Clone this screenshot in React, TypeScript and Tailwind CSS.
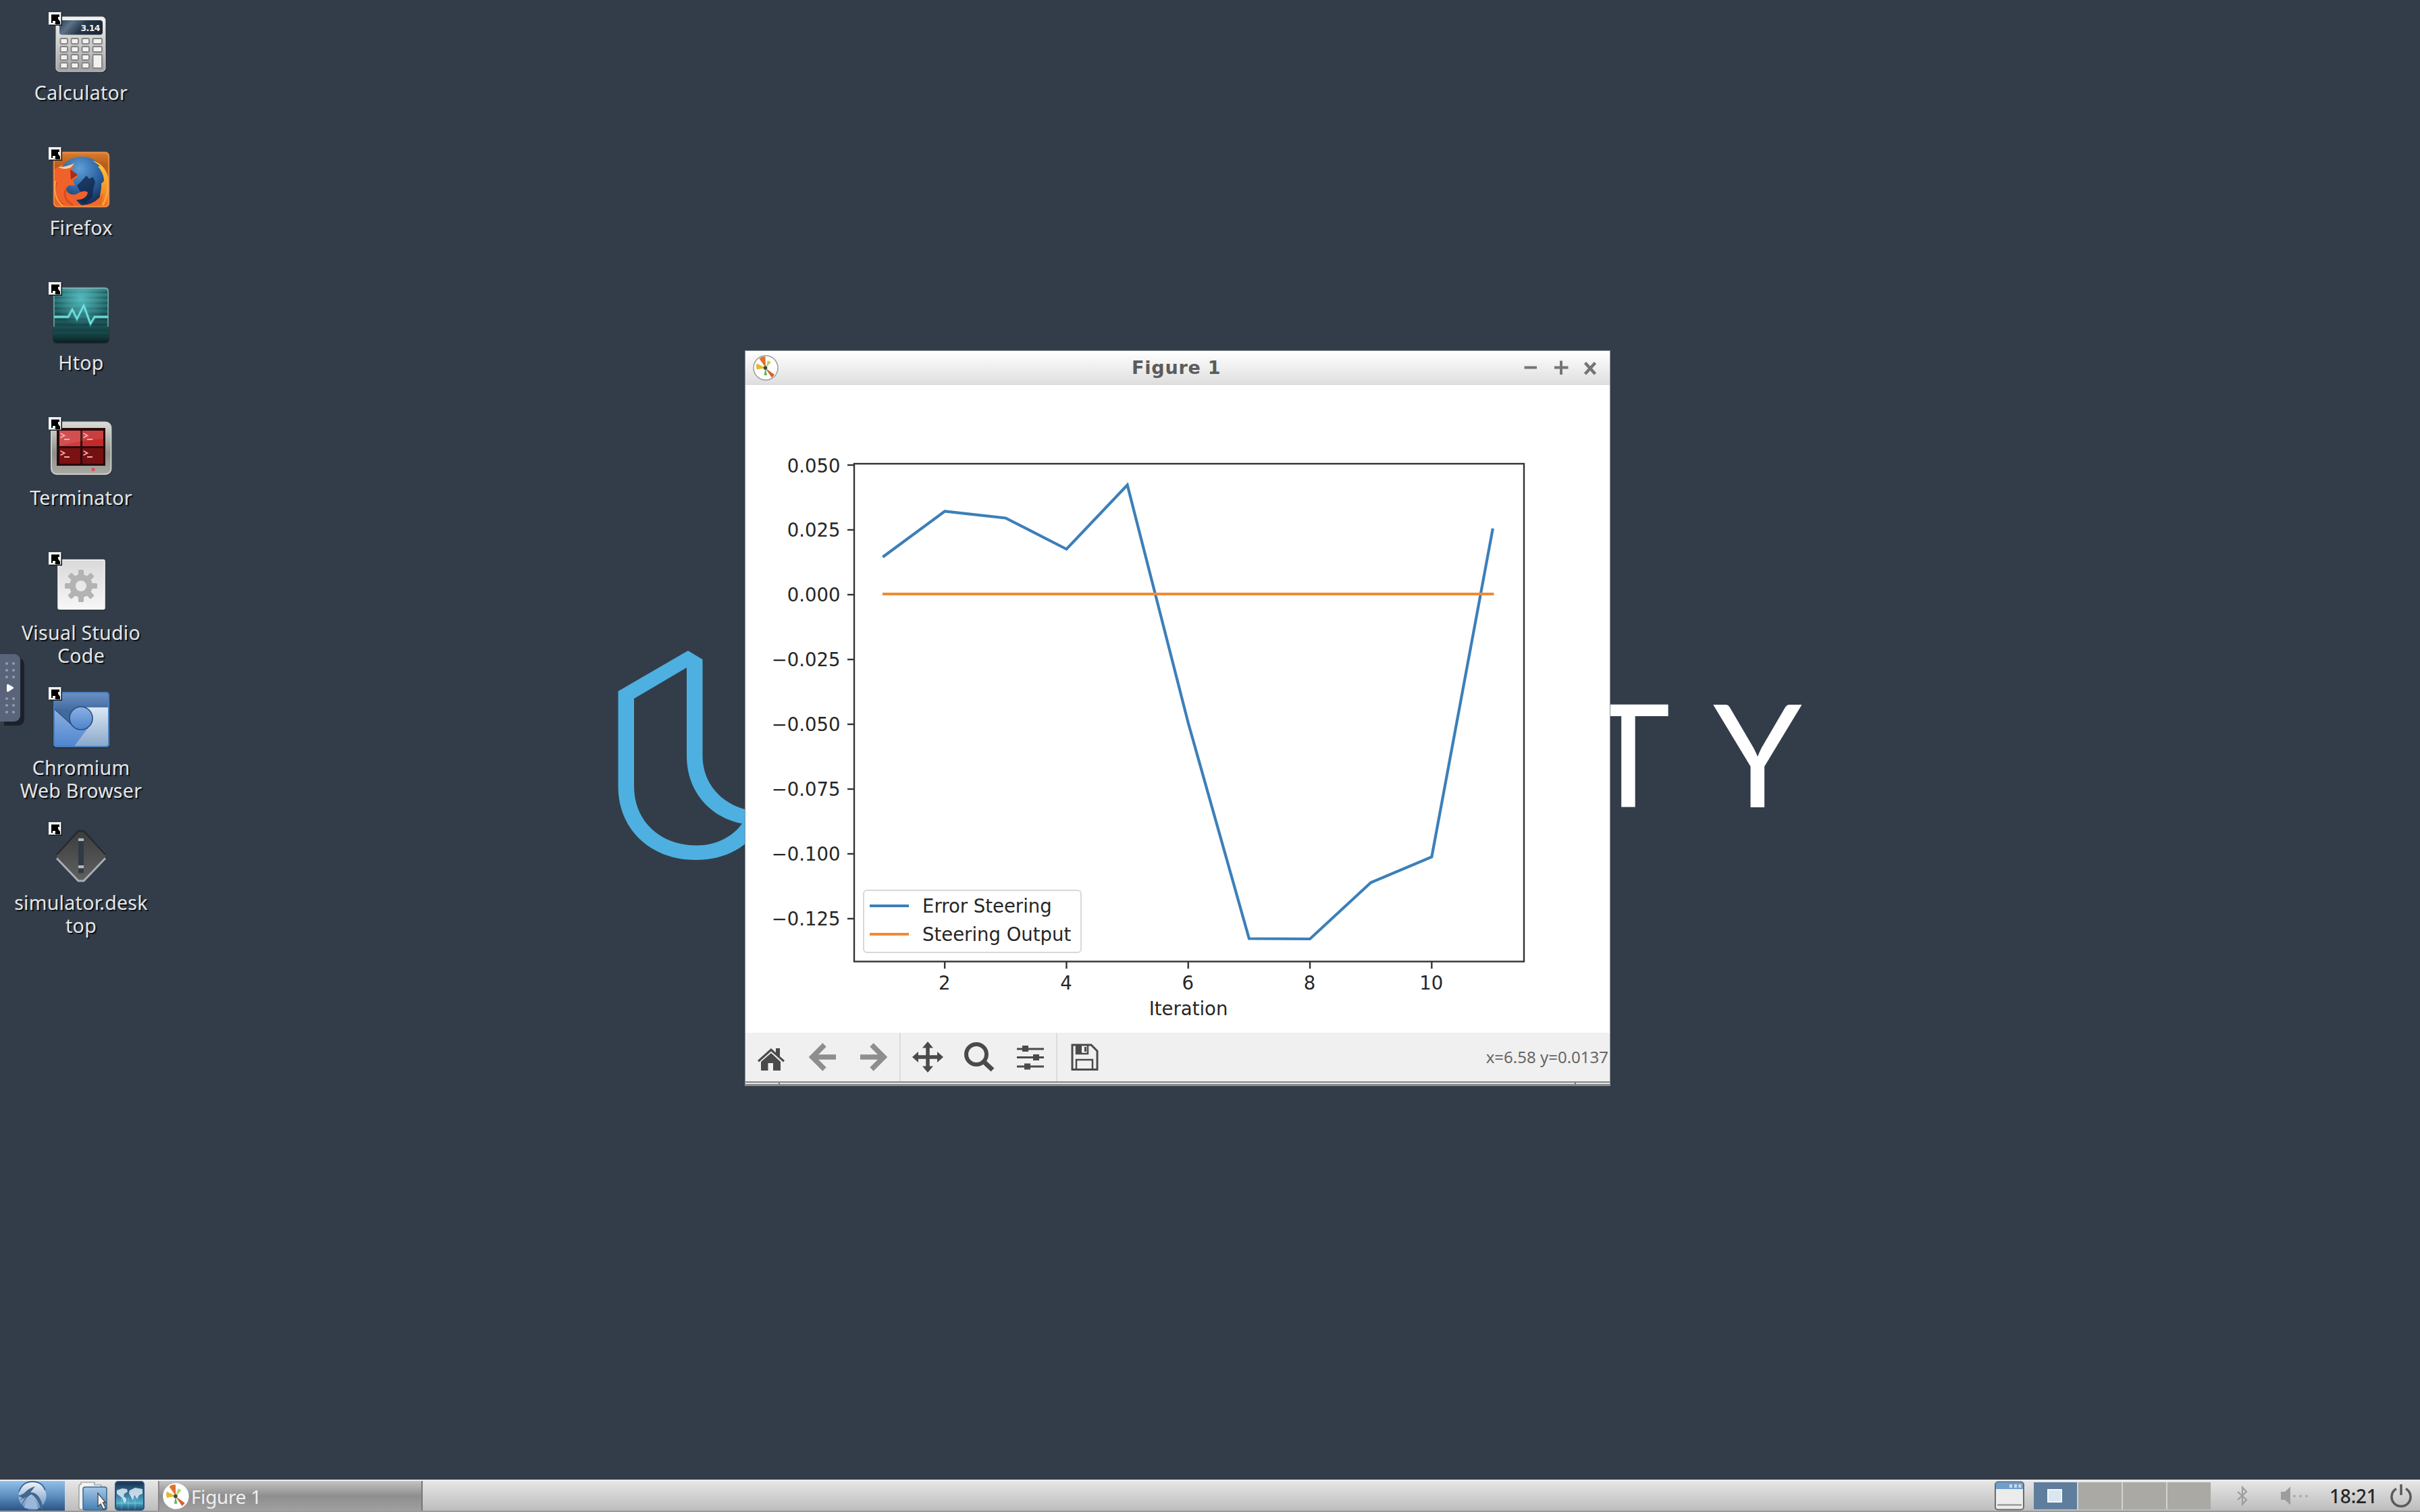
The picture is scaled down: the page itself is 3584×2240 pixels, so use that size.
import type { ReactNode } from "react";

const SANS = "font-['Noto_Sans','Open_Sans',sans-serif]";

function ShortcutBadge() {
  return (
    <g>
      <rect x="73" y="19" width="19" height="19" fill="#10151b" />
      <rect x="72" y="18" width="18.5" height="18.5" fill="#f4f4f4" />
      <path d="M76 21.5h12v3.5h-2v3l3 4v4h-6l-4-3.500v1.500h-3z" fill="#000" />
      <path d="M78 31h4v3h-4z" fill="#f4f4f4" />
    </g>
  );
}

function IconBox({ children }: { children: ReactNode }) {
  return (
    <svg className="mt-[15px] h-[100px] w-[100px] shrink-0" viewBox="70 15 100 100">
      {children}
      <ShortcutBadge />
    </svg>
  );
}

function CalculatorIcon() {
  const keys: ReactNode[] = [];
  for (let r = 0; r < 4; r++)
    for (let c = 0; c < 4; c++) {
      if (c === 3 && r > 1) continue;
      keys.push(
        <rect key={`${r}-${c}`} x={89.5 + c * 16} y={57 + r * 12} width={c === 3 ? 13.5 : 10.5} height="8" rx="1.5" />
      );
    }
  return (
    <IconBox>
      <defs>
        <linearGradient id="calc-body" x1="0" y1="0" x2="0" y2="1">
          <stop offset="0" stopColor="#f3f3f2" />
          <stop offset="1" stopColor="#a2a2a2" />
        </linearGradient>
        <linearGradient id="calc-lcd" x1="0" y1="0" x2="1" y2="0.3">
          <stop offset="0" stopColor="#2b3d52" />
          <stop offset="0.3" stopColor="#5d7388" />
          <stop offset="0.6" stopColor="#2a3a4c" />
          <stop offset="1" stopColor="#1c2838" />
        </linearGradient>
      </defs>
      <rect x="83" y="26" width="75" height="82" rx="6" fill="#262e38" />
      <rect x="83" y="25" width="73" height="81" rx="5" fill="url(#calc-body)" stroke="#dededd" strokeWidth="1" />
      <rect x="88" y="30" width="64" height="21.5" rx="4" fill="url(#calc-lcd)" />
      <text x="148.5" y="46" textAnchor="end" fontFamily="DejaVu Sans" fontWeight="bold" fontSize="12.5" textLength="29" fill="#eef2f5">
        3.14
      </text>
      <g fill="#f1f1f0" stroke="#838383" strokeWidth="1.9">
        {keys}
        <rect x="137.5" y="81" width="13.5" height="20" rx="1.5" />
      </g>
    </IconBox>
  );
}

function FirefoxIcon() {
  return (
    <IconBox>
      <defs>
        <linearGradient id="ff-bg" x1="0" y1="0" x2="0" y2="1">
          <stop offset="0" stopColor="#d98032" />
          <stop offset="0.25" stopColor="#b95a1a" />
          <stop offset="1" stopColor="#f4792a" />
        </linearGradient>
        <radialGradient id="ff-globe" cx="0.45" cy="0.25" r="0.8">
          <stop offset="0" stopColor="#5e9fd6" />
          <stop offset="0.5" stopColor="#2f66a6" />
          <stop offset="1" stopColor="#12254b" />
        </radialGradient>
        <linearGradient id="ff-tail" x1="0" y1="0" x2="0" y2="1">
          <stop offset="0" stopColor="#fbd23b" />
          <stop offset="1" stopColor="#ef6a22" />
        </linearGradient>
        <clipPath id="ff-clip">
          <rect x="79" y="25" width="83" height="82" rx="6" />
        </clipPath>
      </defs>
      <rect x="79" y="25" width="83" height="82" rx="6" fill="url(#ff-bg)" />
      <g clipPath="url(#ff-clip)">
        <path d="M79 107V70C80 60 83 50 90 44l62 2c10 14 12 40 2 61z" fill="#ee6a24" />
        <circle cx="121" cy="68" r="36" fill="url(#ff-globe)" />
        <path d="M128 60l4 5 6-3 3 8-3 10-1 12-12 10-10-6 4-12-5-9 6-6z" fill="#0f2444" opacity="0.75" />
        <path d="M137 38c13 3 22 14 24 30v40h-14c4-8 6-16 6-22l-5 8c0-9 3-15 2-22l4-4c0-8-4-16-9-21l3-1-5-4z" fill="url(#ff-tail)" />
        <path d="M159 62c2 16 0 30-7 42" fill="none" stroke="#f9a93b" strokeWidth="2.500" />
        <path d="M79 54c2-3 5-6 8-7l13 0 10-5-4 12 9 5c2 3-5 6-7 8l3 8c-7-1-12-1-13 6 3 8 12 9 18 5 4-3 11-4 14-1-1 8-9 11-17 11 4 6 8 10 18 10H79z" fill="#f0622a" />
        <path d="M98 80c-5 9 0 18 10 24M84 70c-6 14 0 26 10 34" fill="none" stroke="#c63d1b" strokeWidth="3" opacity="0.6" />
        <path d="M82 68c-3 18 2 30 12 38" fill="none" stroke="#f9a03b" strokeWidth="2.500" />
        <path d="M86 47c7 1 15-1 24-5l-5 6c-6 3-14 3-19-1z" fill="#f7cfa0" />
        <path d="M104 51l11 8-10 7z" fill="#a92c1a" />
      </g>
      <rect x="80" y="26" width="81" height="80" rx="5" fill="none" stroke="#f2a45b" strokeWidth="1.500" />
      <rect x="79" y="25" width="83" height="82" rx="6" fill="none" stroke="#d2541c" strokeWidth="1" />
    </IconBox>
  );
}

function HtopIcon() {
  return (
    <IconBox>
      <defs>
        <linearGradient id="ht-bg" x1="0" y1="0" x2="0" y2="1">
          <stop offset="0" stopColor="#2f7d7f" />
          <stop offset="0.5" stopColor="#206063" />
          <stop offset="0.85" stopColor="#174446" />
          <stop offset="1" stopColor="#0b1f22" />
        </linearGradient>
        <radialGradient id="ht-glow" cx="0.5" cy="0.2" r="0.5">
          <stop offset="0" stopColor="#5cc9cb" stopOpacity="0.85" />
          <stop offset="1" stopColor="#5cc9cb" stopOpacity="0" />
        </radialGradient>
      </defs>
      <rect x="78" y="26" width="84" height="83" rx="6" fill="#202a33" />
      <rect x="78.500" y="25.500" width="83" height="82" rx="6" fill="url(#ht-bg)" />
      <g stroke="#113d40" strokeWidth="3" opacity="0.5">
        {[33, 41, 49, 57, 65, 73, 81, 89, 97].map((y) => (
          <path key={y} d={`M80 ${y}H160`} />
        ))}
      </g>
      <rect x="79" y="26" width="82" height="81" fill="url(#ht-glow)" />
      <path d="M80 84V31q0-4 5-4h70q5 0 5 4v53" fill="none" stroke="#8cb5b6" strokeWidth="1.300" />
      <path d="M80 69.500h21l6-11 7 14 10-20 10 27 6-10h20" fill="none" stroke="#4fb9bb" strokeWidth="5" opacity="0.4" />
      <path d="M80 69.500h21l6-11 7 14 10-20 10 27 6-10h20" fill="none" stroke="#72e4e2" strokeWidth="2.300" />
    </IconBox>
  );
}

function TerminatorIcon() {
  const panes: [number, number, string][] = [
    [88, 38, "#cf3b3b"],
    [122, 38, "#c32a2a"],
    [88, 64, "#7a1112"],
    [122, 64, "#741011"],
  ];
  return (
    <IconBox>
      <defs>
        <linearGradient id="tm-frame" x1="0" y1="0" x2="0" y2="1">
          <stop offset="0" stopColor="#dcdcd8" />
          <stop offset="0.6" stopColor="#8d8e88" />
          <stop offset="1" stopColor="#a9aaa4" />
        </linearGradient>
      </defs>
      <rect x="76" y="27" width="90" height="78" rx="9" fill="#28313b" />
      <rect x="76" y="25.500" width="88.500" height="77" rx="8" fill="url(#tm-frame)" stroke="#d3d3cf" strokeWidth="1.800" />
      <rect x="84" y="34" width="72" height="56" fill="#2a0a0d" />
      {panes.map(([x, y, c]) => (
        <g key={`${x}-${y}`}>
          <rect x={x} y={y} width="31" height={23} fill={c} />
          <path d={`M${x + 1.5} ${y + 4}l6 3.200-6 3.200M${x + 7} ${y + 13}h8`} stroke="#efaaaa" strokeWidth="1.800" fill="none" />
        </g>
      ))}
      <path d="M88 38h65v12q-35 2-65 11z" fill="#fff" opacity="0.1" />
      <circle cx="138" cy="95.500" r="2.600" fill="#e84b5c" />
    </IconBox>
  );
}

function GearFileIcon() {
  return (
    <IconBox>
      <defs>
        <linearGradient id="gf" x1="0" y1="0" x2="0" y2="1">
          <stop offset="0" stopColor="#d9d9d9" />
          <stop offset="1" stopColor="#f7f7f7" />
        </linearGradient>
      </defs>
      <rect x="85" y="30" width="71" height="75" rx="3" fill="#222a33" />
      <rect x="86" y="29.500" width="69" height="73" rx="2" fill="url(#gf)" stroke="#fafafa" strokeWidth="1.500" />
      <g fill="#b3b3b3">
        {[0, 45, 90, 135, 180, 225, 270, 315].map((a) => (
          <rect key={a} x="116" y="44" width="8" height="12" rx="1.500" transform={`rotate(${a} 120 68)`} />
        ))}
      </g>
      <circle cx="120" cy="68" r="12.500" fill="none" stroke="#b3b3b3" strokeWidth="9" />
    </IconBox>
  );
}

function ChromiumIcon() {
  return (
    <IconBox>
      <defs>
        <linearGradient id="cr-top" x1="0" y1="0" x2="0" y2="1">
          <stop offset="0" stopColor="#6d92c4" />
          <stop offset="0.35" stopColor="#41699e" />
          <stop offset="1" stopColor="#3f699f" />
        </linearGradient>
        <linearGradient id="cr-left" x1="0" y1="0" x2="0" y2="1">
          <stop offset="0" stopColor="#8db1e2" />
          <stop offset="1" stopColor="#4d83cd" />
        </linearGradient>
        <linearGradient id="cr-right" x1="0" y1="0" x2="0" y2="1">
          <stop offset="0" stopColor="#dbe7f4" />
          <stop offset="1" stopColor="#86a6c9" />
        </linearGradient>
        <clipPath id="cr-clip">
          <rect x="79" y="25" width="83" height="82" rx="5" />
        </clipPath>
      </defs>
      <rect x="78" y="27" width="84" height="82" rx="5" fill="#26303c" />
      <g clipPath="url(#cr-clip)">
        <rect x="79" y="25" width="83" height="82" fill="url(#cr-top)" />
        <path d="M79 49l30 27 22 4-20 28H79z" fill="url(#cr-left)" />
        <path d="M120 48h42v60h-54l25-33 4-16z" fill="url(#cr-right)" />
        <path d="M79 49l31 28" stroke="#264d7d" strokeWidth="1.200" />
      </g>
      <circle cx="120" cy="64" r="17" fill="url(#cr-left)" stroke="#264d7d" strokeWidth="1.600" />
      <rect x="80" y="26" width="81" height="80" rx="4.500" fill="none" stroke="#4a7fbd" strokeWidth="2" />
    </IconBox>
  );
}

function DiamondIcon() {
  return (
    <IconBox>
      <defs>
        <linearGradient id="dm" x1="0" y1="0" x2="0" y2="1">
          <stop offset="0" stopColor="#3a3b3c" />
          <stop offset="1" stopColor="#606161" />
        </linearGradient>
      </defs>
      <path d="M116 29.500h8l32 34v8l-32 34h-8l-32-34v-8z" fill="url(#dm)" />
      <path d="M84 66l32-35h8l32 35" fill="none" stroke="#26292c" strokeWidth="2.500" />
      <path d="M84 71.500l32 33.500h8l32-33.500" fill="none" stroke="#a9aeb3" strokeWidth="3" />
      <rect x="116" y="44" width="8" height="38" fill="#303a46" />
      <rect x="116" y="42" width="8" height="4" fill="#b4b9be" />
      <rect x="116" y="82" width="8" height="4" fill="#b4b9be" />
      <rect x="116" y="87" width="8" height="6.500" fill="#303a46" />
    </IconBox>
  );
}

function DesktopItem({ icon, lines }: { icon: ReactNode; lines: string[] }) {
  return (
    <div className="flex h-[200px] w-[240px] flex-col items-center">
      {icon}
      <div className="flex flex-col items-center pt-[5px] text-[28.500px] leading-[34px] tracking-[0.300px] text-[#e3e6e8] [text-shadow:2px_2px_1px_#0c1015]">
        {lines.map((l) => (
          <span key={l} className="whitespace-nowrap">
            {l}
          </span>
        ))}
      </div>
    </div>
  );
}

/* Matplotlib's polar wheel mark. */
function PlotMark({ className, rim }: { className: string; rim: string }) {
  return (
    <svg className={className} viewBox="0 0 40 40">
      <circle cx="20" cy="20" r="18" fill="#fff" stroke={rim} strokeWidth="1.500" />
      <path d="M20 20L10.500 6.500q4-4 9-3z" fill="#e0702c" />
      <path d="M20 20L7 22.500q-2-5 0-9z" fill="#e8b731" />
      <path d="M20 20l3-11 5 2.500z" fill="#b9d35e" />
      <path d="M19 20l14 10-4 4.500z" fill="#d4622a" />
      <path d="M19.500 20l2.500 11h-4.500z" fill="#63b35c" />
      <circle cx="19.500" cy="20" r="2.800" fill="#3c4b3c" />
    </svg>
  );
}

const px = (i: number) => 205 + (i - 1) * 90.15;
const errorY = [824, 757.5, 767.5, 813.5, 718.5, 1071, 1390.5, 1391, 1307.5, 1269.5, 785];
const yTicks = ["0.050", "0.025", "0.000", "−0.025", "−0.050", "−0.075", "−0.100", "−0.125"];

function Chart() {
  return (
    <svg className="block h-[960px] w-[1280px] bg-white" viewBox="0 570 1280 960" fontFamily="DejaVu Sans" fontSize="27.500" fill="#262626">
      <g stroke="#333" strokeWidth="2.400">
        {yTicks.map((t, i) => (
          <path key={t} d={`M151 ${689 + i * 96}h10`} />
        ))}
        {[2, 4, 6, 8, 10].map((t) => (
          <path key={t} d={`M${px(t)} 1425v10`} />
        ))}
      </g>
      {yTicks.map((t, i) => (
        <text key={t} x="140.500" y={699.5 + i * 95.9} textAnchor="end">
          {t}
        </text>
      ))}
      {[2, 4, 6, 8, 10].map((t) => (
        <text key={t} x={px(t) - 0.5} y="1466" textAnchor="middle">
          {t}
        </text>
      ))}
      <text x="656" y="1503.500" textAnchor="middle">
        Iteration
      </text>
      <polyline points={errorY.map((y, i) => `${px(i + 1)},${y}`).join(" ")} fill="none" stroke="#3c7fb9" strokeWidth="4.200" strokeLinecap="square" />
      <path d={`M${px(1) - 2} 880H${px(11) + 2}`} stroke="#f08a35" strokeWidth="4.200" />
      <rect x="161" y="687" width="992" height="737.500" fill="none" stroke="#333" strokeWidth="2.400" />
      <rect x="175" y="1319" width="322" height="92" rx="5" fill="#fff" stroke="#d8d8d8" strokeWidth="2" />
      <path d="M184 1342h58" stroke="#3c7fb9" strokeWidth="4.200" />
      <path d="M184 1384h58" stroke="#f08a35" strokeWidth="4.200" />
      <text x="262" y="1351.500">Error Steering</text>
      <text x="262" y="1393.500">Steering Output</text>
    </svg>
  );
}

function Tool({ children, className }: { children: ReactNode; className: string }) {
  return (
    <svg className={`h-12 w-12 shrink-0 ${className}`} viewBox="0 0 48 48">
      {children}
    </svg>
  );
}

function Toolbar() {
  const ink = "#4a4a4a";
  const off = "#8e8e8e";
  return (
    <div className="flex h-[72px] items-center bg-[#f0f0f0]">
      <Tool className="ml-[14px]">
        <path d="M4 29L24 11l7 6.500V11h6v12l7 6-2 2.500-18-16-18 16z" fill={ink} />
        <path d="M24 18L9 31v13h10.500V33h7.500v11h11V31z" fill={ink} />
      </Tool>
      <Tool className="ml-[29px]">
        <path d="M26 6L8 24l18 18M9 24h34" fill="none" stroke={off} strokeWidth="7.500" />
      </Tool>
      <Tool className="ml-[26px]">
        <path d="M22 6l18 18-18 18M39 24H5" fill="none" stroke={off} strokeWidth="7.500" />
      </Tool>
      <div className="ml-[15px] h-full w-[2px] bg-[#dcdcdc]" />
      <Tool className="ml-[16px]">
        <path d="M24 4v40M4 24h40" stroke={ink} strokeWidth="5.500" />
        <path d="M24 1l8 9.500H16zM24 47l8-9.500H16zM1 24l9-8v16zM47 24l-9-8v16z" fill={ink} />
      </Tool>
      <Tool className="ml-[28px]">
        <circle cx="20" cy="20" r="15" fill="none" stroke={ink} strokeWidth="6" />
        <path d="M30 30l14 13" stroke={ink} strokeWidth="7" />
      </Tool>
      <Tool className="ml-[28px]">
        <path d="M4 12h40M4 24.500h40M4 38h40" stroke={ink} strokeWidth="3" />
        <path d="M12 7h9v9h-9zM28 20h9v9h-9zM15 33.500h9v9h-9z" fill={ink} />
      </Tool>
      <div className="ml-[14px] h-full w-[2px] bg-[#dcdcdc]" />
      <Tool className="ml-[16px]">
        <path d="M6 6h28l9 9v27.500H6z" fill="none" stroke={ink} strokeWidth="3" />
        <path d="M12 6v13h17V6M12 43V28h24v15" fill="none" stroke={ink} strokeWidth="2.500" />
        <path d="M12 6h8v13h-8zM24 9h3v7h-3z" fill={ink} />
      </Tool>
      <span className="ml-auto mr-[2px] text-[24px] leading-none tracking-[0px] text-[#666]">x=6.58 y=0.0137</span>
    </div>
  );
}

function FigureWindow() {
  return (
    <div className="absolute left-[1103px] top-[519px] flex h-[1090px] w-[1282px] flex-col border border-[#8d9196] bg-white">
      <div className="flex h-[50px] shrink-0 items-center border-b border-[#d0d0d0] bg-gradient-to-b from-white to-[#dfdfdf]">
        <PlotMark className="ml-[10px] h-[40px] w-[40px]" rim="#9b9b9b" />
        <span className="ml-[522px] w-[150px] whitespace-nowrap font-['DejaVu_Sans'] text-[27px] font-bold leading-none tracking-[0.800px] text-[#5c5c5c]">Figure 1</span>
        <svg className="ml-[419px] h-[30px] w-[130px]" viewBox="2245 527 130 30" fill="none" stroke="#757575">
          <path d="M2257.500 541.500H2276" strokeWidth="4" />
          <path d="M2302 541.500h20.500M2312 531.500v20.500" strokeWidth="4" />
          <path d="M2347.500 534.500l15 16.500M2362.500 534.500l-15 16.500" strokeWidth="4.500" />
        </svg>
      </div>
      <Chart />
      <Toolbar />
      <div className="flex h-[6px] items-stretch border-y-2 border-[#858585] bg-[#e4e4e4]">
        <div className="w-[51px] border-r-2 border-[#777]" />
        <div className="flex-1" />
        <div className="w-[52px] border-l-2 border-[#777]" />
      </div>
    </div>
  );
}

function SideTab() {
  return (
    <div className="absolute left-0 top-[969px] h-[100px] w-[30px] rounded-r-[9px] bg-[#59647b] shadow-[6px_6px_0_#1c2129]">
      <svg className="h-[100px] w-[30px]" viewBox="0 0 30 100">
        {[14, 24, 34, 66, 76, 86].map((y) => (
          <g key={y} fill="#949ba8">
            <circle cx="10" cy={y} r="2.100" />
            <circle cx="20" cy={y} r="2.100" />
          </g>
        ))}
        <path d="M11.500 46l7 4-7 4.500z" fill="#fff" stroke="#fff" strokeWidth="3" strokeLinejoin="round" />
      </svg>
    </div>
  );
}

function Wallpaper() {
  return (
    <>
      <svg className="absolute left-[900px] top-[950px] h-[340px] w-[210px]" viewBox="900 950 210 340">
        <path
          fillRule="evenodd"
          fill="#4eb0e0"
          d="M915.500 1024L1019 964l21.500 13V1120C1040.500 1160 1068 1191 1106 1199.500V1248C1088 1264 1062 1274 1030 1274C965 1274 915.500 1230 915.500 1165ZM939 1035L1017 989V1120C1017 1174 1054 1212 1099 1220C1085 1240 1060 1252.500 1032 1252.500C976 1252.500 939 1215 939 1165Z"
        />
      </svg>
      <div className="absolute left-[2349px] top-[1005px] whitespace-pre font-[Lato] text-[211px] leading-[220px] text-white">
        <span className="inline-block w-[188px]">T</span>
        <span>Y</span>
      </div>
    </>
  );
}

function Taskbar() {
  return (
    <div className="flex h-[48px] items-center border-b-2 border-t-2 border-b-[#9a9a9a] border-t-[#eeeeee] bg-gradient-to-b from-[#e6e6e6] to-[#bdbdbd]">
      <div className="flex h-full w-[96px] items-center justify-center bg-gradient-to-b from-[#93c0ea] via-[#5d8fc1] to-[#2b5485]">
        <svg className="h-[44px] w-[48px]" viewBox="0 0 48 44">
          <defs>
            <linearGradient id="lx" x1="0" y1="0" x2="0" y2="1">
              <stop offset="0" stopColor="#f2f7fc" />
              <stop offset="1" stopColor="#5f8abb" />
            </linearGradient>
          </defs>
          <ellipse cx="24" cy="22" rx="20.500" ry="21" fill="url(#lx)" />
          <path d="M4 16C8 5 15 1 24 1s16 4 19 13" fill="none" stroke="#3d6897" strokeWidth="1.800" />
          <path d="M2 22q6-1 10-4 6-7 16-10-3 4-7 9c8-1 16 6 19 24l-3 1C33 31 29 23 22 20 15 24 10 31 8 38l-1-1c2-5 4-9 7-13l-9 5 4-4z" fill="#41688f" />
          <path d="M12 40c2-10 6-15 11-17 5 4 8 11 9 19z" fill="#9bb8d8" />
        </svg>
      </div>
      <svg className="ml-[20px] h-[44px] w-[46px]" viewBox="0 0 46 44">
        <defs>
          <linearGradient id="fm" x1="0" y1="0" x2="0" y2="1">
            <stop offset="0" stopColor="#a4c6e6" />
            <stop offset="1" stopColor="#4481b8" />
          </linearGradient>
        </defs>
        <path d="M1 8q0-3 3-3V2h20v4h10v6H10v30H4q-3 0-3-3z" fill="#f2f2f2" stroke="#909090" strokeWidth="1.200" />
        <rect x="7" y="9" width="35" height="34" rx="3" fill="url(#fm)" stroke="#3b658c" strokeWidth="1.500" />
        <path d="M29 18v20l4-4 4 8 3.500-2-4-8h4z" fill="#f4f4f4" stroke="#444" strokeWidth="1.300" />
      </svg>
      <svg className="ml-[8px] h-[44px] w-[44px]" viewBox="0 0 44 44">
        <defs>
          <linearGradient id="wb" x1="0" y1="0" x2="0" y2="1">
            <stop offset="0" stopColor="#14304f" />
            <stop offset="0.5" stopColor="#3d80a5" />
            <stop offset="0.75" stopColor="#4fb0c8" />
            <stop offset="1" stopColor="#1c4a70" />
          </linearGradient>
        </defs>
        <rect x="1" y="1" width="42" height="42" rx="4" fill="url(#wb)" stroke="#2a4f87" strokeWidth="2" />
        <path d="M3 14l8-3 7 1 1 4-5 3-1 4 4 3v4l-3 3-3-8-8-6zM22 14l8-4 11 2v7l-5 2-3 6-3-5-1-1-2 8-4-7-2-4z" fill="#dcebf3" opacity="0.850" />
        <path d="M4 33h36M10 24v18M20 24v18M30 24v18" stroke="#bfe4f0" strokeWidth="0.800" opacity="0.500" />
      </svg>
      <div className="ml-[20px] flex h-full w-[392px] items-center border-l-2 border-r-2 border-l-[#888] border-r-[#777] bg-gradient-to-b from-[#c4c4c4] via-[#8e8e8e] to-[#a0a0a0]">
        <PlotMark className="ml-[4px] h-[41px] w-[41px]" rim="#ffffff" />
        <span className="ml-[2px] whitespace-nowrap pt-[2px] text-[28px] leading-none tracking-[-0.300px] text-[#efefef]">Figure 1</span>
      </div>

      <svg className="ml-auto h-[44px] w-[44px]" viewBox="0 0 44 44">
        <rect x="1" y="1.500" width="42" height="41" rx="4" fill="#ececec" stroke="#6c6c6c" strokeWidth="2" />
        <path d="M2 12V5q0-3 3-3h34q3 0 3 3v7z" fill="#6f9ecb" />
        <path d="M22 5h4v5h-4zM29 5h4v5h-4zM35.500 5h4v5h-4z" fill="#c5dbef" />
        <path d="M4 35.500h36" stroke="#8a8a8a" strokeWidth="2" />
      </svg>
      <div className="ml-[14px] flex h-[40px] gap-[2px] bg-[#d2d2d2]">
        <div className="flex h-full w-[64px] items-center justify-center bg-[#5f7e9d]">
          <div className="mr-[2px] h-[20px] w-[22px] border-2 border-[#f2f7fb] bg-[#d9e5f1]" />
        </div>
        <div className="w-[64px] bg-[#aba9a4]" />
        <div className="w-[64px] bg-[#aba9a4]" />
        <div className="w-[64px] bg-[#aba9a4]" />
      </div>
      <svg className="ml-[38px] h-[30px] w-[18px]" viewBox="0 0 18 30">
        <path d="M2 9l13 12-6 6.500V2.500L15 9 2 21" fill="none" stroke="#9d9d9d" strokeWidth="2.200" />
      </svg>
      <svg className="ml-[47px] h-[30px] w-[42px]" viewBox="0 0 42 30">
        <path d="M1 9h6l8-7.500v27L7 21H1z" fill="#9c9c9c" />
        <g fill="#adadad">
          <circle cx="21" cy="15.500" r="2" />
          <circle cx="30" cy="15.500" r="2" />
          <circle cx="39" cy="15.500" r="2" />
        </g>
      </svg>
      <span className="ml-[31px] w-[75px] whitespace-nowrap text-[28px] font-medium leading-none tracking-[-0.200px] text-[#262626]">18:21</span>
      <svg className="ml-[13px] mr-[10px] h-[38px] w-[36px]" viewBox="0 0 36 38">
        <path d="M11 8.500a14 14 0 1 0 14 0M18 2v16" fill="none" stroke="#5a5a5a" strokeWidth="3.500" />
      </svg>
    </div>
  );
}

export default function App() {
  return (
    <div className={`relative flex h-[2240px] w-[3584px] flex-col overflow-hidden bg-[#333d49] ${SANS}`}>
      <div className="relative flex-1">
        <Wallpaper />
        <div className="flex w-[240px] flex-col">
          <DesktopItem icon={<CalculatorIcon />} lines={["Calculator"]} />
          <DesktopItem icon={<FirefoxIcon />} lines={["Firefox"]} />
          <DesktopItem icon={<HtopIcon />} lines={["Htop"]} />
          <DesktopItem icon={<TerminatorIcon />} lines={["Terminator"]} />
          <DesktopItem icon={<GearFileIcon />} lines={["Visual Studio", "Code"]} />
          <DesktopItem icon={<ChromiumIcon />} lines={["Chromium", "Web Browser"]} />
          <DesktopItem icon={<DiamondIcon />} lines={["simulator.desk", "top"]} />
        </div>
        <SideTab />
        <FigureWindow />
      </div>
      <Taskbar />
    </div>
  );
}
